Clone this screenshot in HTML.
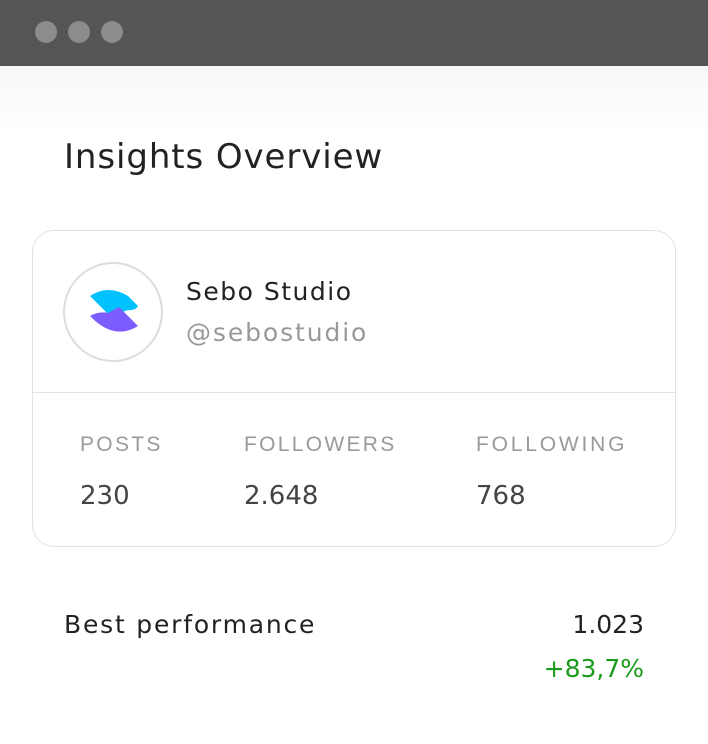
<!DOCTYPE html>
<html><head><style>
body{margin:0;width:708px;height:744px;background:#fff;font-family:"DejaVu Sans",sans-serif;position:relative;overflow:hidden}
.bar{position:absolute;left:0;top:0;width:708px;height:66px;background:#555}
.dot{position:absolute;top:21px;width:22px;height:22px;border-radius:50%;background:#8c8c8c}
.shade{position:absolute;top:66px;left:0;width:708px;height:70px;background:linear-gradient(#f7f8fa,#fff)}
.t{position:absolute;white-space:nowrap}
.card{position:absolute;left:32px;top:230px;width:644px;height:317px;border:1px solid #e2e2e2;border-radius:22px;box-sizing:border-box}
.lbl{color:#9a9a9a;font-size:21px;letter-spacing:2.3px;top:433px;font-family:"Liberation Sans",sans-serif}
.val{color:#444;font-size:26px;top:481px}
</style></head><body>
<div class="bar"></div>
<div class="dot" style="left:35px"></div><div class="dot" style="left:68px"></div><div class="dot" style="left:101px"></div>
<div class="shade"></div>
<div class="t" style="left:64px;top:137px;font-size:34px;color:#222;letter-spacing:0.9px">Insights Overview</div>
<div class="card"></div>
<div style="position:absolute;left:63px;top:262px;width:96px;height:96px;border:2px solid #ddd;border-radius:50%"></div>
<svg style="position:absolute;left:0;top:0" width="708" height="744">
<path d="M90 296 Q108 284 128 296 L138 306 Q135 311 128 310 L110 316 Z" fill="#00c2ff"/>
<path d="M90 316 Q99 311 108 313 L119 307 L138 326 Q114 341 90 316 Z" fill="#7c5cff"/>
</svg>
<div class="t" style="left:186px;top:277px;font-size:25px;color:#222;letter-spacing:1.5px">Sebo Studio</div>
<div class="t" style="left:186px;top:318px;font-size:25px;color:#999;letter-spacing:1.9px">@sebostudio</div>
<div style="position:absolute;left:33px;top:392px;width:642px;height:1px;background:#e2e2e2"></div>
<div class="t lbl" style="left:80px">POSTS</div>
<div class="t lbl" style="left:244px">FOLLOWERS</div>
<div class="t lbl" style="left:476px;letter-spacing:2.8px">FOLLOWING</div>
<div class="t val" style="left:80px">230</div>
<div class="t val" style="left:244px">2.648</div>
<div class="t val" style="left:476px">768</div>
<div class="t" style="left:64px;top:610px;font-size:25px;color:#222;letter-spacing:1.8px">Best performance</div>
<div class="t" style="right:64px;top:610px;font-size:25px;color:#222">1.023</div>
<div class="t" style="right:64px;top:654px;font-size:25px;color:#1a9a1a">+83,7%</div>
</body></html>
